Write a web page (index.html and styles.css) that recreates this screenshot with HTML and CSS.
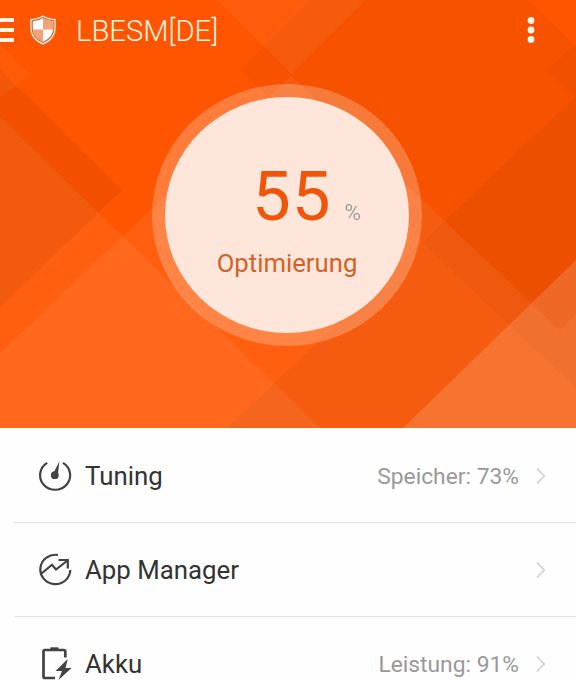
FILE: index.html
```html
<!DOCTYPE html>
<html lang="de">
<head>
    <meta charset="UTF-8">
    <meta name="viewport" content="width=device-width, initial-scale=1.0">
    <title>LBESM[DE]</title>
    <link rel="stylesheet" href="styles.css">
</head>
<body>
    <div class="app">
        <section class="hero">
            <!-- Overlapping translucent squares -->
            <svg class="hero-bg" viewBox="0 0 576 428">
                <g fill="#000">
                    <path fill-opacity=".034" d="M310 0L240 70L576 388V46L528 0z"/>
                    <path fill-opacity=".034" d="M227 428L576 96V428z"/>
                    <path fill-opacity=".05" d="M0 70L122 190L0 308z"/>
                    <path fill-opacity=".025" d="M576 43L547 71L576 99z"/>
                </g>
                <g fill="#fff">
                    <path fill-opacity=".05" d="M217 0H366L291 74z"/>
                    <path fill-opacity=".06" d="M0 353L291 76L560 330L576 314V428H0z"/>
                    <path fill-opacity=".06" d="M0 117L320 428H0z"/>
                    <path fill-opacity=".14" d="M403 428L576 260V428z"/>
                    <path fill-opacity=".035" d="M0 44L30 75L0 97z"/>
                </g>
            </svg>

            <header class="header">
                <svg class="menu-icon" width="14" height="24" viewBox="0 0 14 24">
                    <path d="M0 2H14M0 12H14M0 22H14" stroke="#fff5e6" stroke-width="4"/>
                </svg>
                <svg class="shield-icon" width="28" height="32" viewBox="0 0 28 32">
                    <path d="M14 1C10 3.8 5.500 4.600 1 4.600V14C1 22.500 6.500 28 14 31C21.500 28 27 22.500 27 14V4.600C22.500 4.600 18 3.800 14 1z" fill="#ffe9d2" stroke="#c86a35" stroke-width=".7"/>
                    <path d="M14 3.500C10.800 5.600 7 6.600 3.200 6.800V14C3.200 21 8 25.800 14 28.500C20 25.800 24.800 21 24.800 14V6.800C21 6.600 17.200 5.600 14 3.500z" fill="#fff" stroke="#c4693a" stroke-width="1.200"/>
                    <path d="M14 4C17.200 6 21 7 24.300 7.200V15.500H14z" fill="#f5a27a"/>
                    <path d="M14 15.500V28C8.500 25.500 4.200 21.500 3.700 15.500z" fill="#f5a27a"/>
                </svg>
                <h1 class="title">LBESM[DE]</h1>
                <svg class="more-icon" width="8" height="26" viewBox="0 0 8 26" fill="#fff5e6">
                    <circle cx="4" cy="3.500" r="3.400"/>
                    <circle cx="4" cy="13" r="3.400"/>
                    <circle cx="4" cy="22.500" r="3.400"/>
                </svg>
            </header>

            <div class="gauge">
                <div class="gauge-inner">
                    <div class="score"><span class="score-value">55</span><span class="score-unit">%</span></div>
                    <div class="score-label">Optimierung</div>
                </div>
            </div>
        </section>

        <ul class="list">
            <li class="row">
                <svg class="row-icon" width="34" height="34" viewBox="0 0 34 34" fill="none" stroke="#424242" stroke-width="2.200">
                    <path d="M9.200 3.900A15 14.500 0 1 0 25 3.900"/>
                    <circle cx="16.800" cy="16.200" r="3.900" fill="#424242" stroke="none"/>
                    <path d="M21.300 2.500L19.800 17L15 15z" fill="#424242" stroke="none"/>
                </svg>
                <span class="row-name">Tuning</span>
                <span class="row-info">Speicher: 73%</span>
                <svg class="chevron" width="10" height="18" viewBox="0 0 10 18"><path d="M1 1.500L8.300 9L1 16.500"/></svg>
            </li>
            <li class="row">
                <svg class="row-icon" width="34" height="34" viewBox="0 0 34 34" fill="none" stroke="#424242" stroke-width="2.200">
                    <path d="M20 2A15 14.700 0 1 0 32.300 17"/>
                    <path d="M3.500 20.500L14 11.700L18 16.500L29.500 7.500"/>
                    <path d="M20.500 7H29.800V15.500"/>
                </svg>
                <span class="row-name">App Manager</span>
                <svg class="chevron" width="10" height="18" viewBox="0 0 10 18"><path d="M1 1.500L8.300 9L1 16.500"/></svg>
            </li>
            <li class="row">
                <svg class="row-icon" width="34" height="34" viewBox="0 0 34 34" fill="none" stroke="#424242" stroke-width="2.700">
                    <path d="M17 31H7Q5.500 31 5.500 29.500V4.500Q5.500 3 7 3H25.800Q27.300 3 27.300 4.500V10.500"/>
                    <path d="M12.500 1.300H20.500" stroke-width="2"/>
                    <path d="M29.800 12L17.500 24H24L20.500 33L33.500 21H27.500z" fill="#424242" stroke="none"/>
                </svg>
                <span class="row-name">Akku</span>
                <span class="row-info">Leistung: 91%</span>
                <svg class="chevron" width="10" height="18" viewBox="0 0 10 18"><path d="M1 1.500L8.300 9L1 16.500"/></svg>
            </li>
        </ul>
    </div>
</body>
</html>
```
FILE: styles.css
```css
* {
    box-sizing: border-box;
    margin: 0;
    padding: 0;
}

body {
    font-family: Roboto, 'Liberation Sans', sans-serif;
    background-color: #fefefe;
    color: #333;
}

.app {
    width: 576px;
    height: 680px;
    overflow: hidden;
}

.hero {
    position: relative;
    height: 428px;
    background-color: #ff5500;
}

/* backdrop behind header and gauge */
.hero-bg {
    position: absolute;
    left: 0;
    top: 0;
    width: 100%;
    height: 100%;
}

.header {
    position: relative;
    display: flex;
    align-items: center;
    height: 60px;
    padding-right: 41px;
}

.shield-icon {
    margin-left: 15px;
    margin-top: -1px;
}

.title {
    margin-left: 19px;
    font-size: 29.2px;
    font-weight: 300;
    line-height: 34px;
    color: #fff3e0;
    padding-top: 1px;
}

.more-icon {
    margin-left: auto;
}

.gauge {
    position: relative;
    display: flex;
    justify-content: center;
    width: 270px;
    height: 262px;
    margin: 24px 0 0 152px;
    padding-top: 13px;
    border-radius: 50%;
    background-color: rgba(255, 255, 255, 0.23);
}

.gauge-inner {
    width: 244px;
    height: 236px;
    padding-top: 59px;
    border-radius: 50%;
    background-color: #fee7da;
    text-align: center;
}

.score {
    display: flex;
    align-items: baseline;
    height: 82px;
    padding-left: 87px;
    line-height: 82px;
}

.score-value {
    font-size: 69px;
    letter-spacing: 1px;
    color: #f0560a;
}

.score-unit {
    margin-left: 13px;
    font-size: 22px;
    font-weight: 300;
    color: #888;
}

.score-label {
    margin-top: 10px;
    font-size: 25.7px;
    line-height: 30px;
    color: #d2622a;
}

.list {
    list-style: none;
    padding: 1px 0 0 14px;
}

.row {
    display: flex;
    align-items: center;
    height: 94px;
    padding: 0 30px 0 24px;
    border-bottom: 1px solid #e2e2e2;
}

.row-name {
    margin-left: 13px;
    padding-top: 1px;
    font-size: 25.8px;
}

.row-info {
    margin-left: auto;
    padding-top: 1px;
    font-size: 22.8px;
    color: #999;
}

.chevron {
    margin-left: 17px;
    fill: none;
    stroke: #d6d6d6;
    stroke-width: 1.8;
}

.row-name + .chevron {
    margin-left: auto;
}
```
